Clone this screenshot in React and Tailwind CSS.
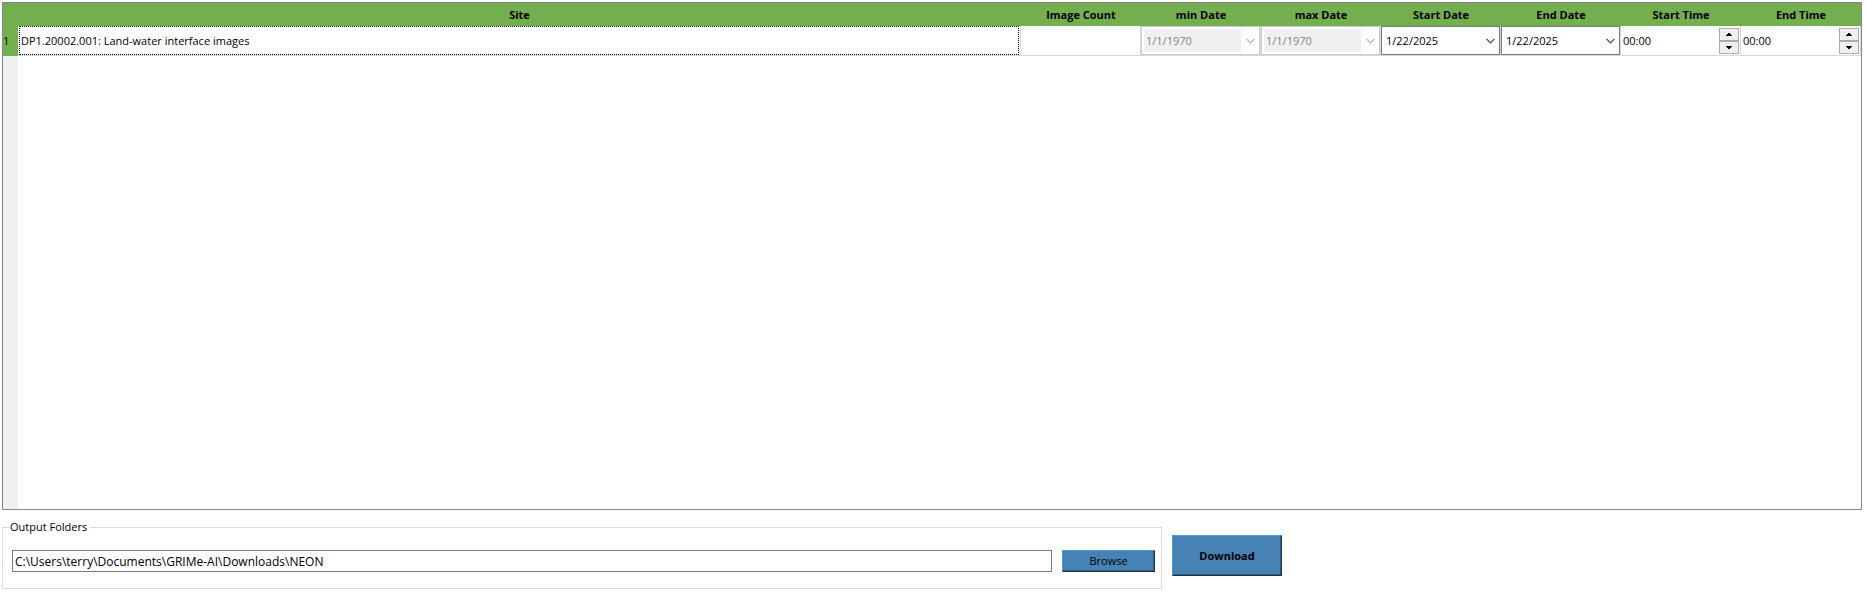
import React from 'react';

const headings = ['Image Count', 'min Date', 'max Date', 'Start Date', 'End Date', 'Start Time', 'End Time'];

function DateField({ label, value, disabled = false }) {
  return (
    <div
      className={
        disabled
          ? 'grid h-[29px] items-center border border-[#cccccc] bg-white p-[2px]'
          : 'grid h-[29px] items-center border border-[#7a7a7a] bg-white p-[2px]'
      }
    >
      <select
        aria-label={label}
        disabled={disabled}
        defaultValue={value}
        className={
          disabled
            ? 'col-start-1 row-start-1 mr-4 h-[23px] appearance-none bg-[#f0f0f0] pl-[2px] text-[#838383] opacity-100'
            : 'col-start-1 row-start-1 h-[23px] appearance-none bg-transparent pl-[2px] text-black'
        }
      >
        <option>{value}</option>
      </select>
      <svg
        viewBox="0 0 9 6"
        className={
          disabled
            ? 'pointer-events-none col-start-1 row-start-1 mr-[2px] h-[6px] w-[9px] justify-self-end text-[#b4b4b4]'
            : 'pointer-events-none col-start-1 row-start-1 mr-[2px] h-[6px] w-[9px] justify-self-end text-[#444444]'
        }
        aria-hidden="true"
      >
        <path d="M0.5 0.8 4.5 4.8 8.5 0.8" fill="none" stroke="currentColor" strokeWidth="1.2" />
      </svg>
    </div>
  );
}

function SpinButton({ label, path }) {
  return (
    <button
      type="button"
      aria-label={label}
      className="flex h-[13px] w-5 items-center justify-center border border-[#acacac] bg-[#f0f0f0]"
    >
      <svg viewBox="0 0 6 3" className="h-[3px] w-[6px]" shapeRendering="crispEdges" aria-hidden="true">
        <path d={path} fill="#000" />
      </svg>
    </button>
  );
}

function TimeField({ label }) {
  return (
    <div className="flex h-[29px] items-center pr-px">
      <input aria-label={label} defaultValue="00:00" className="h-6 w-full min-w-0 bg-white pl-[2px] outline-none" />
      <div className="flex flex-col">
        <SpinButton label={label + ' up'} path="M2 0H4V1H5V2H6V3H0V2H1V1H2Z" />
        <SpinButton label={label + ' down'} path="M0 0H6V1H5V2H4V3H2V2H1V1H0Z" />
      </div>
    </div>
  );
}

export default function App() {
  return (
    <main className="flex min-h-screen flex-col bg-white pt-[2px] pr-1 pb-1 pl-[2px] font-['Open_Sans','Noto_Sans',sans-serif] text-[11px] leading-4 text-black">
      <section className="flex flex-1 flex-col border border-[#828790]">
        <table className="w-full table-fixed border-collapse">
          <colgroup>
            <col className="w-[15px]" />
            <col />
            {headings.map((h) => (
              <col key={h} className="w-[120px]" />
            ))}
          </colgroup>
          <thead>
            <tr className="h-[23px] bg-[#74af4f]">
              <td className="p-0" />
              <th scope="col" className="p-0 font-bold">Site</th>
              {headings.map((h) => (
                <th key={h} scope="col" className="p-0 font-bold">{h}</th>
              ))}
            </tr>
          </thead>
          <tbody>
            <tr className="h-[30px]">
              <th scope="row" className="bg-[#74af4f] p-0 text-left font-normal">1</th>
              <td className="p-0 align-top">
                <div className="flex h-[30px] border-r border-b border-[#d8d8d8] pr-px pl-px">
                  <div className="flex h-[29px] flex-1 items-center border border-dotted border-black pl-px">
                    DP1.20002.001: Land-water interface images
                  </div>
                </div>
              </td>
              <td className="p-0 align-top">
                <div className="h-[30px] border-r border-b border-[#d8d8d8]" />
              </td>
              <td className="p-0 align-top">
                <div className="border-r border-b border-[#d8d8d8]"><DateField label="min Date" value="1/1/1970" disabled /></div>
              </td>
              <td className="p-0 align-top">
                <div className="border-r border-b border-[#d8d8d8]"><DateField label="max Date" value="1/1/1970" disabled /></div>
              </td>
              <td className="p-0 align-top">
                <div className="border-r border-b border-[#d8d8d8]"><DateField label="Start Date" value="1/22/2025" /></div>
              </td>
              <td className="p-0 align-top">
                <div className="border-r border-b border-[#d8d8d8]"><DateField label="End Date" value="1/22/2025" /></div>
              </td>
              <td className="p-0 align-top">
                <div className="border-r border-b border-[#d8d8d8]"><TimeField label="Start Time" /></div>
              </td>
              <td className="p-0 align-top">
                <div className="border-r border-b border-[#d8d8d8]"><TimeField label="End Time" /></div>
              </td>
            </tr>
          </tbody>
        </table>
        <div className="w-[15px] flex-1 bg-[#f0f0f0]" />
      </section>

      <div className="mt-[9px] grid grid-cols-[1160fr_690fr] gap-[10px]">
        <fieldset className="min-w-0 border border-[#dcdcdc] px-[9px] pb-4">
          <legend className="-ml-[2px] pr-[3px]">Output Folders</legend>
          <div className="flex items-center gap-[10px] pt-[15px] -mr-[3px]">
            <input
              aria-label="Output folder"
              defaultValue="C:\Users\terry\Documents\GRIMe-AI\Downloads\NEON"
              className="h-[22px] min-w-0 flex-1 border border-[#7a7a7a] bg-white px-[2px] text-[12px] outline-none"
            />
            <button
              type="button"
              className="h-[22px] w-[93px] border border-t-[#4a9ae0] border-r-[#1c3448] border-b-[#1c3448] border-l-[#4a9ae0] bg-[#4682b4] shadow-[inset_-1px_-1px_0_#2f5a7e]"
            >
              Browse
            </button>
          </div>
        </fieldset>
        <div className="pt-4">
          <button
            type="button"
            className="h-[41px] w-[110px] border border-t-[#4a9ae0] border-r-[#1c3448] border-b-[#1c3448] border-l-[#4a9ae0] bg-[#4682b4] font-bold shadow-[inset_-1px_-1px_0_#2f5a7e]"
          >
            Download
          </button>
        </div>
      </div>
    </main>
  );
}
